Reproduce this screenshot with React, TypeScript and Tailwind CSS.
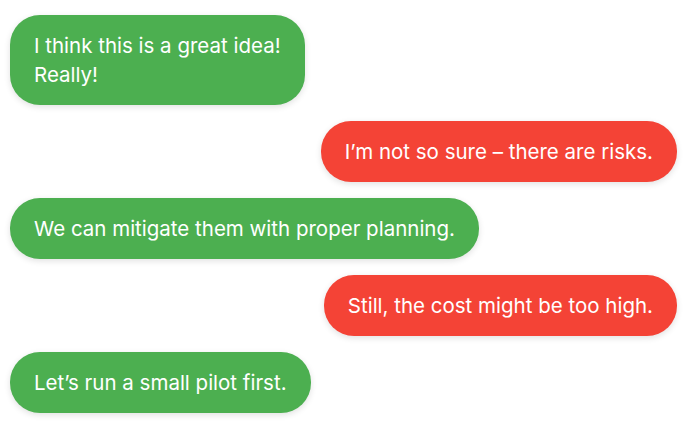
const messages = [
  { side: "left", lines: ["I think this is a great idea!", "Really!"] },
  { side: "right", lines: ["I\u2019m not so sure \u2013 there are risks."] },
  { side: "left", lines: ["We can mitigate them with proper planning."] },
  { side: "right", lines: ["Still, the cost might be too high."] },
  { side: "left", lines: ["Let\u2019s run a small pilot first."] },
];

export default function App() {
  return (
    <div
      className="flex flex-col gap-[16px] bg-white pl-[10px] pr-[13px] pt-[15px] min-h-screen"
      style={{ fontFamily: "Inter, 'Noto Sans', sans-serif" }}
    >
      {messages.map((m, i) => (
        <div key={i} className={m.side === "left" ? "flex justify-start" : "flex justify-end"}>
          <div
            className={
              "rounded-[30px] px-[24px] py-[16px] text-[20.5px] leading-[29px] text-white shadow-[0_2px_6px_rgba(0,0,0,0.12)] " +
              (m.side === "left" ? "bg-[#4caf50]" : "bg-[#f44336]")
            }
          >
            {m.lines.map((l, j) => (
              <div key={j}>{l}</div>
            ))}
          </div>
        </div>
      ))}
    </div>
  );
}
